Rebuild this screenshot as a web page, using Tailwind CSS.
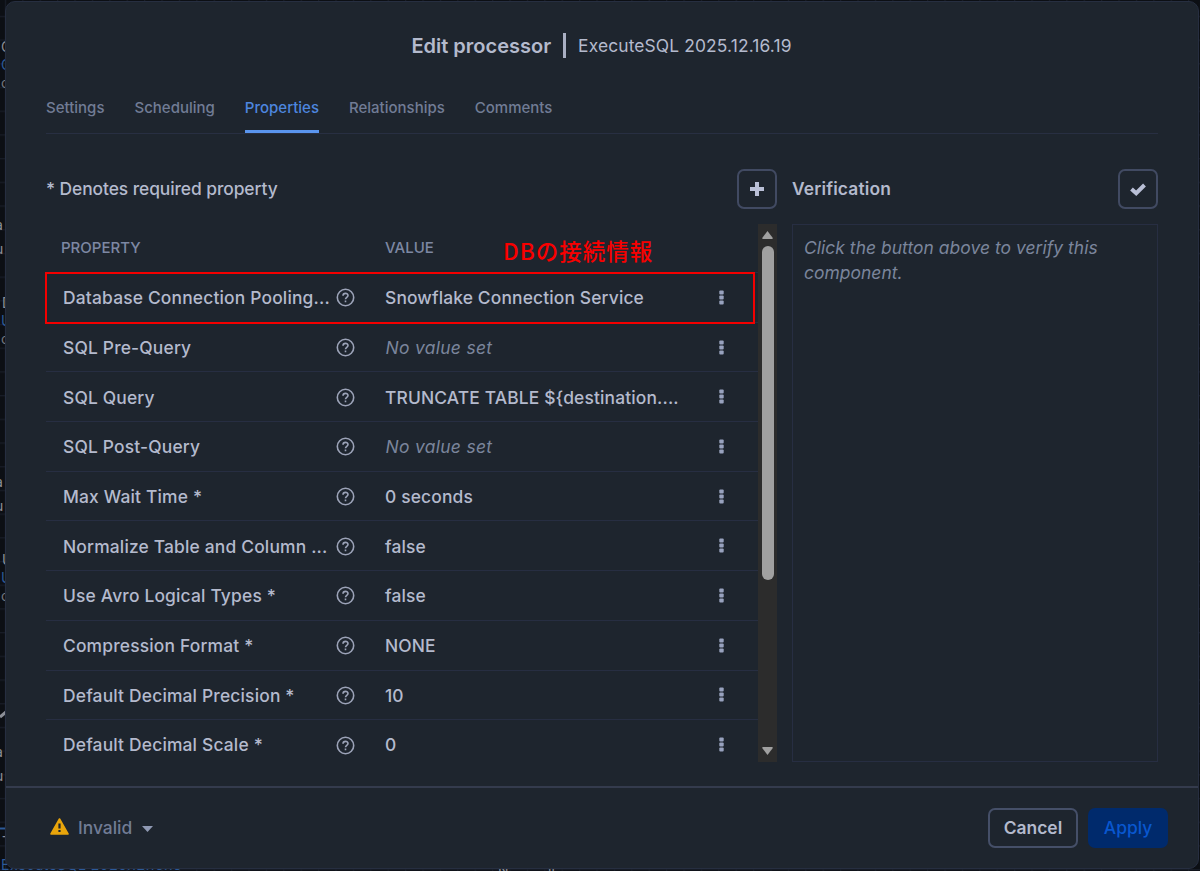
<!DOCTYPE html>
<html lang="en">
<head>
    <meta charset="UTF-8">
    <meta name="viewport" content="width=device-width, initial-scale=1.0">
    <title>Edit processor</title>
    <script src="https://cdn.jsdelivr.net/npm/@tailwindcss/browser@4"></script>
</head>
<body class="relative h-[871px] w-[1200px] overflow-hidden bg-[#0c0f14] font-['Inter','Noto_Sans_CJK_JP',sans-serif] text-[#b4bacd]">
    <!-- Flow canvas behind the dialog -->
    <svg class="absolute inset-0" width="1200" height="871">
        <defs>
            <pattern id="grid" width="17.4" height="23.7" patternUnits="userSpaceOnUse">
                <path d="M5.5 0V24M0 16.5H18" stroke="#1a1f2b" fill="none"/>
            </pattern>
        </defs>
        <rect width="1200" height="871" fill="url(#grid)"/>
        <path d="M0 717L6 712" stroke="#8b8e96" stroke-width="3"/>
        <path d="M0 828.5H6" stroke="#2c5a99" stroke-width="2"/>
    </svg>
    <div id="canvas"></div>

    <!-- Dialog -->
    <div class="absolute top-px left-[5px] flex h-[868px] w-[1194px] flex-col rounded-[10px] border border-[#262e40] bg-[#1e252e]">
        <div class="flex h-[85px] items-center justify-center pt-[2px] pr-px">
            <h2 class="text-[20px] leading-6 font-semibold">Edit processor</h2>
            <span class="mr-[12px] ml-[12px] h-[25px] w-[3px] bg-[#a9afc2]"></span>
            <span class="pt-px text-[17.4px] tracking-[0.13px]">ExecuteSQL 2025.12.16.19</span>
        </div>

        <div class="mx-10 flex h-[47px] shrink-0 gap-[30px] border-b border-[#282f42] text-[15px] font-medium text-[#717c95]">
            <div class="pt-[10px]">Settings</div>
            <div class="pt-[10px]">Scheduling</div>
            <div class="h-[46px] border-b-3 border-[#5a95ee] pt-[10px] text-[#4d86df]">Properties</div>
            <div class="pt-[10px]">Relationships</div>
            <div class="pt-[10px]">Comments</div>
        </div>

        <div class="mx-10 mt-[35px] flex gap-[15px]">
            <!-- Property table -->
            <div class="w-[731px]">
                <div class="flex h-10 items-center justify-between">
                    <span class="text-[17.4px] font-medium tracking-[-0.07px]">* Denotes required property</span>
                    <button class="flex size-10 items-center justify-center rounded-[7px] border-2 border-[#414a62]">
                        <svg width="16" height="16" viewBox="0 0 16 16" stroke="#b9bfd6" stroke-width="4"><path d="M8 1V15M1 8H15"/></svg>
                    </button>
                </div>
                <div class="mt-[15px] flex h-[538px]">
                    <div class="w-[712px] overflow-hidden">
                        <div class="flex h-[49px] items-center border-b border-[#272e42] pt-px pl-[15px] text-[15px] font-medium text-[#7d88a3]">
                            <span class="w-[324px]">PROPERTY</span>
                            <span>VALUE</span>
                        </div>
                        <div id="rows"></div>
                    </div>
                    <div class="flex w-[19px] flex-col items-center justify-between bg-[#2c2c2c] pt-[7px] pb-[7px]">
                        <svg class="shrink-0" width="11" height="8" viewBox="0 0 11 8" fill="#a0a0a0"><path d="M5.5 0L10.8 7Q10.8 8 10 8H1Q.2 8 .2 7Z"/></svg>
                        <div class="mt-[7px] mb-auto h-[334px] w-[12px] rounded-full bg-[#a0a0a0]"></div>
                        <svg class="shrink-0" width="11" height="8" viewBox="0 0 11 8" fill="#a0a0a0"><path d="M5.5 8L10.8 1Q10.8 0 10 0H1Q.2 0 .2 1Z"/></svg>
                    </div>
                </div>
            </div>

            <!-- Verification -->
            <div class="w-[366px]">
                <div class="flex h-10 items-center justify-between">
                    <span class="text-[17.4px] font-semibold tracking-[0.15px]">Verification</span>
                    <button class="flex size-10 items-center justify-center rounded-[7px] border-2 border-[#414a62]">
                        <svg width="16" height="13" viewBox="0 0 16 13" fill="none" stroke="#b9bfd6" stroke-width="4"><path d="M1.5 6L6.2 10.2L14.5 2"/></svg>
                    </button>
                </div>
                <div class="mt-[15px] h-[538px] border border-[#272e42] px-[11px] py-[10px] text-[17.4px] leading-[25px] tracking-[0.06px] text-[#7b859c] italic">Click the button above to verify this component.</div>
            </div>
        </div>

        <!-- Footer -->
        <div class="mt-auto flex h-[82px] items-center border-t-2 border-[#343b4d] pr-[30px] pl-[44px]">
            <svg class="mb-[3px]" width="19" height="17" viewBox="0 0 19 17"><path d="M9.5 1L18 16H1Z" fill="#e9a50b" stroke="#e9a50b" stroke-width="1.6" stroke-linejoin="round"/><path d="M9.5 5.5V10.5M9.5 12V14" stroke="#1e252e" stroke-width="2.2"/></svg>
            <span class="ml-[9px] text-[17.4px] font-medium text-[#717c95]">Invalid</span>
            <svg class="mt-[2px] ml-[10px]" width="11" height="6" viewBox="0 0 11 6" fill="#8f99b3"><path d="M0 0H11L5.5 6Z"/></svg>
            <button class="ml-auto h-10 w-[90px] rounded-[7px] border-2 border-[#454f68] text-[17.4px] font-semibold">Cancel</button>
            <button class="ml-[10px] h-10 w-[80px] rounded-[7px] bg-[#002a6c] text-[17.4px] font-medium text-[#0957cf]">Apply</button>
        </div>
    </div>

    <!-- Annotation -->
    <div class="absolute top-[272px] left-[44.5px] h-[52px] w-[710px] border-2 border-[#f40000]"></div>
    <div class="absolute top-[234px] left-[503px] text-[22.5px] leading-8 font-medium tracking-[1px] whitespace-nowrap text-[#f80000] font-['Noto_Sans_CJK_JP',sans-serif]">DBの接続情報</div>

    <script>
        const rows = [
            ['Database Connection Pooling...', 'Snowflake Connection Service'],
            ['SQL Pre-Query', null],
            ['SQL Query', 'TRUNCATE TABLE ${destination....'],
            ['SQL Post-Query', null],
            ['Max Wait Time *', '0 seconds'],
            ['Normalize Table and Column ...', 'false'],
            ['Use Avro Logical Types *', 'false'],
            ['Compression Format *', 'NONE'],
            ['Default Decimal Precision *', '10'],
            ['Default Decimal Scale *', '0'],
        ];

        document.querySelector('#rows').innerHTML = rows.map(([name, value]) => `
            <div class="flex h-[49.7px] items-center border-b border-[#272e42] pt-px pl-[17px] text-[17.4px] font-medium last:border-transparent">
                <span class="w-[273px] pt-px whitespace-nowrap tracking-[0.18px]">${name}</span>
                <svg width="19" height="19" viewBox="0 0 19 19" fill="none" stroke="#9ca3b8" stroke-width="1.6">
                    <circle cx="9.5" cy="9.5" r="8.2"/>
                    <path d="M7 7.8C7 4.6 12 4.7 12 7.5C12 9.4 9.5 9.2 9.5 11.2M9.5 12.6V14.2"/>
                </svg>
                ${value === null
                    ? '<span class="ml-[30.5px] w-[333px] pt-px font-normal tracking-[0.33px] text-[#7b859c] italic">No value set</span>'
                    : `<span class="ml-[30px] w-[333.5px] pt-px whitespace-nowrap tracking-[0.15px]">${value}</span>`}
                <svg class="mb-px" width="5" height="15" viewBox="0 0 5 15" fill="#98a2be">
                    <rect x=".3" y=".5" width="4.4" height="4" rx="1"/><rect x=".3" y="5.5" width="4.4" height="4" rx="1"/><rect x=".3" y="10.5" width="4.4" height="4" rx="1"/>
                </svg>
            </div>
        `).join('');

        // Canvas labels: left, top, text, classes
        const labels = [
            [1, 38, 'C', 'text-[#8b8e96]'], [1, 56, 'C', 'text-[#2c5a99]'], [1, 74, 'o', 'text-[#73767d]'],
            [-5, 216, 'a', 'text-[#8b8e96]'], [-5, 240, 'u', 'text-[#8b8e96]'],
            [2, 294, 'D', 'text-[#8b8e96]'], [1, 312, 'U', 'text-[#2c5a99]'], [1, 330, 'o', 'text-[#73767d]'],
            [-5, 473, 'a', 'text-[#8b8e96]'], [-5, 497, 'u', 'text-[#8b8e96]'],
            [2, 551, 'U', 'text-[#8b8e96]'], [1, 569, 'U', 'text-[#2c5a99]'], [1, 587, 'o', 'text-[#73767d]'],
            [-5, 743, 'a', 'text-[#8b8e96]'], [-5, 767, 'u', 'text-[#8b8e96]'],
            [2, 833, 'T', 'text-[#8b8e96]'], [1, 856, 'ExecuteSQL 2025.12.16.19', 'text-[#2c5a99] tracking-[0.5px]'],
            [498, 861, 'N', 'text-[#8b8e96]'], [548, 861, 'll', 'text-[#8b8e96]'],
        ];
        document.querySelector('#canvas').innerHTML = labels.map(([x, y, text, color]) =>
            `<span class="absolute text-[14px] leading-[18px] whitespace-nowrap ${color}" style="left:${x}px;top:${y}px">${text}</span>`
        ).join('');
    </script>
</body>
</html>
